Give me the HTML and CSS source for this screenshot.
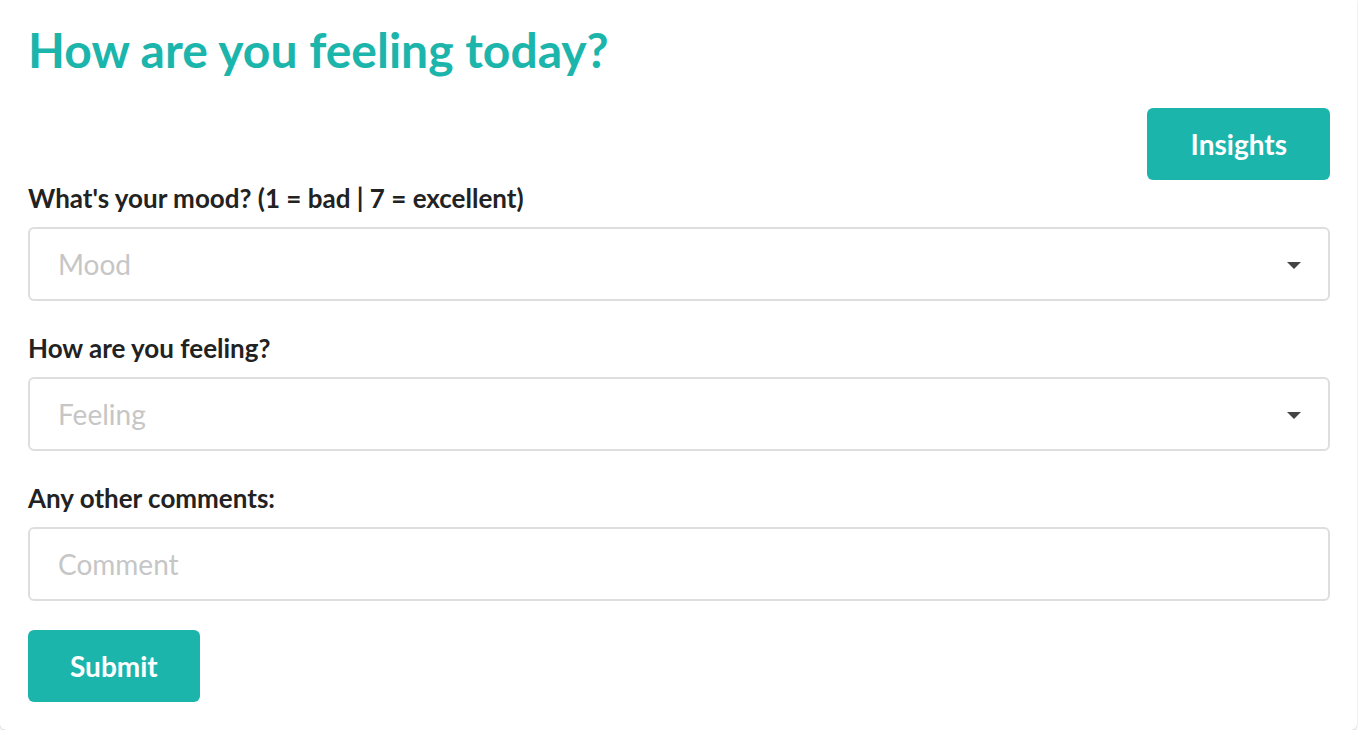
FILE: index.html
```html
<!DOCTYPE html>
<html lang="en">
<head>
<meta charset="utf-8">
<title>How are you feeling today?</title>
<link rel="stylesheet" href="styles.css">
</head>
<body>
<main class="card">
  <h1 class="title">How are you feeling today?</h1>
  <div class="actions">
    <button class="btn btn-insights" type="button">Insights</button>
  </div>
  <form class="form">
    <div class="field">
      <label class="label" for="mood">What's your mood? (1 = bad | 7 = excellent)</label>
      <div class="select">
        <span class="placeholder" id="mood">Mood</span>
        <span class="caret"></span>
      </div>
    </div>
    <div class="field">
      <label class="label" for="feeling">How are you feeling?</label>
      <div class="select">
        <span class="placeholder" id="feeling">Feeling</span>
        <span class="caret"></span>
      </div>
    </div>
    <div class="field">
      <label class="label" for="comment">Any other comments:</label>
      <input class="input" id="comment" type="text" placeholder="Comment">
    </div>
    <button class="btn btn-submit" type="button">Submit</button>
  </form>
</main>
</body>
</html>
```

FILE: styles.css
```css
* { box-sizing: border-box; }

html, body {
  margin: 0;
  padding: 0;
  background: #ffffff;
}

body {
  font-family: Lato, "Open Sans", "Liberation Sans", sans-serif;
  color: #222222;
}

.card {
  width: 1357px;
  padding: 21px 27px 28px 28px;
  background: #ffffff;
  border-radius: 0 0 6px 6px;
  box-shadow: 0 1px 2px rgba(0, 0, 0, 0.22);
}

.title {
  margin: 0;
  font-size: 48px;
  line-height: 58px;
  font-weight: 700;
  color: #1cb5ac;
}

.actions {
  display: flex;
  justify-content: flex-end;
  margin-top: 29px;
}

.btn {
  height: 72px;
  border: none;
  border-radius: 6px;
  background: #1cb5ac;
  color: #ffffff;
  font-family: Lato, "Open Sans", "Liberation Sans", sans-serif;
  font-size: 28px;
  font-weight: 700;
  padding: 0 42px;
  cursor: pointer;
}

.btn-insights {
  padding: 0 43px 0 44px;
}

.form {
  display: flex;
  flex-direction: column;
  margin-top: 3px;
}

.field {
  display: flex;
  flex-direction: column;
  margin-bottom: 32px;
}

.field:last-of-type {
  margin-bottom: 29px;
}

.label {
  font-size: 26px;
  line-height: 30px;
  font-weight: 700;
  color: #222222;
  margin-bottom: 14px;
}

.select,
.input {
  height: 74px;
  width: 100%;
  border: 2px solid #dedede;
  border-radius: 6px;
  background: #ffffff;
  padding: 0 27px 0 28px;
  font-family: Lato, "Open Sans", "Liberation Sans", sans-serif;
  font-size: 28px;
}

.select {
  display: flex;
  align-items: center;
  justify-content: space-between;
}

.placeholder {
  color: #c6c6c6;
}

.input {
  outline: none;
  color: #222222;
}

.input::placeholder {
  color: #c6c6c6;
}

.caret {
  width: 0;
  height: 0;
  border-left: 7px solid transparent;
  border-right: 7px solid transparent;
  border-top: 7px solid #444444;
  margin-top: 2px;
}

.btn-submit {
  align-self: flex-start;
}
```
